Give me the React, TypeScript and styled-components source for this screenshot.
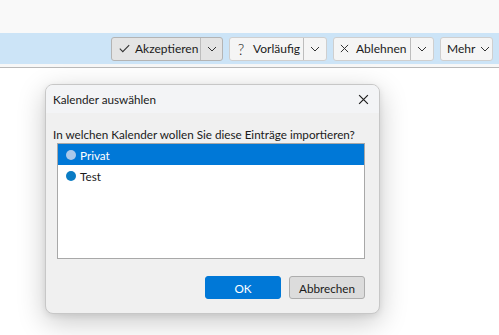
import React from "react";
import styled, { createGlobalStyle } from "styled-components";

const Global = createGlobalStyle`
  html, body { margin: 0; padding: 0; background: #ffffff; }
  body { font-family: "Lato", "Noto Sans", sans-serif; color: #1a1a1a; }
  * { box-sizing: border-box; }
`;

const Page = styled.div`
  width: 499px;
  height: 335px;
  overflow: hidden;
  display: flex;
  flex-direction: column;
  background: #fff;
`;

const TopArea = styled.div`
  height: 33px;
  background: #f9f9f9;
`;

const Bar = styled.div`
  height: 31px;
  background: #cce4f7;
  display: flex;
  justify-content: flex-end;
  align-items: center;
  gap: 6px;
  padding: 0 6px 0 0;
`;

const BarFoot = styled.div`
  height: 4px;
  background: #f7f7f7;
  border-bottom: 1px solid #b9b9b9;
`;

const Group = styled.div<{ $active?: boolean }>`
  display: flex;
  height: 24px;
  border: 1px solid ${(p) => (p.$active ? "#b4b4b4" : "#cfcfcf")};
  border-radius: 3px;
  background: ${(p) => (p.$active ? "#e4e4e4" : "#f5f5f5")};
  overflow: hidden;
`;

const MainPart = styled.div<{ $w: number; $pl?: number }>`
  width: ${(p) => p.$w}px;
  display: flex;
  align-items: center;
  gap: 5px;
  padding-left: ${(p) => p.$pl ?? 7}px;
  font-size: 12px;
  color: #1b1b1b;
  white-space: nowrap;
`;

const DropPart = styled.div<{ $w: number }>`
  width: ${(p) => p.$w}px;
  display: flex;
  align-items: center;
  justify-content: center;
  border-left: 1px solid #bdbdbd;
`;

const Q = styled.span`
  font-size: 15px;
  font-weight: 300;
  width: 10px;
  text-align: center;
  margin-right: 2px;
`;

const Label = styled.span<{ $ml?: number }>`
  margin-left: ${(p) => p.$ml ?? 0}px;
`;

const Content = styled.div`
  flex: 1;
  padding: 16px 0 0 45px;
`;

const Dialog = styled.div`
  width: 335px;
  height: 230px;
  background: #f0f0f0;
  border: 1px solid #c7c7c7;
  border-radius: 8px;
  box-shadow: 0 8px 28px rgba(0, 0, 0, 0.22), 0 2px 6px rgba(0, 0, 0, 0.08);
  display: flex;
  flex-direction: column;
  overflow: hidden;
`;

const TitleBar = styled.div`
  height: 28px;
  background: #f3f4f6;
  display: flex;
  align-items: center;
  justify-content: space-between;
  padding: 0 10px 0 7px;
  font-size: 11.7px;
  color: #1a1a1a;
`;

const Body = styled.div`
  flex: 1;
  display: flex;
  flex-direction: column;
  padding: 13px 14px 14px 7px;
`;

const Prompt = styled.div`
  font-size: 11.7px;
  line-height: 16px;
  margin-bottom: 1px;
  white-space: nowrap;
`;

const List = styled.div`
  margin-left: 4px;
  height: 116px;
  background: #fff;
  border: 1px solid #a8a8a8;
  display: flex;
  flex-direction: column;
`;

const Row = styled.div<{ $selected?: boolean }>`
  height: 21px;
  display: flex;
  align-items: center;
  gap: 4px;
  padding-left: 8px;
  font-size: 11.7px;
  background: ${(p) => (p.$selected ? "#0078d7" : "transparent")};
  color: ${(p) => (p.$selected ? "#fff" : "#1a1a1a")};
`;

const Dot = styled.span<{ $color: string }>`
  width: 10px;
  height: 10px;
  border-radius: 50%;
  background: ${(p) => p.$color};
`;

const Footer = styled.div`
  margin-top: auto;
  display: flex;
  justify-content: flex-end;
  gap: 8px;
`;

const Btn = styled.div<{ $primary?: boolean }>`
  width: 76px;
  height: 23px;
  display: flex;
  align-items: center;
  justify-content: center;
  font-size: 11.7px;
  border-radius: 3px;
  background: ${(p) => (p.$primary ? "#0078d7" : "#dcdcdc")};
  border: 1px solid ${(p) => (p.$primary ? "#0078d7" : "#adadad")};
  color: ${(p) => (p.$primary ? "#fff" : "#1a1a1a")};
`;

const Chevron = () => (
  <svg width="10" height="6" viewBox="0 0 10 6">
    <path d="M1 1 L5 5 L9 1" fill="none" stroke="#333" strokeWidth="1" />
  </svg>
);

const Check = () => (
  <svg width="11" height="9" viewBox="0 0 11 9">
    <path d="M0.8 4.6 L3.8 7.6 L10.2 1.2" fill="none" stroke="#333" strokeWidth="1.1" />
  </svg>
);

const Cross = ({ size = 9, color = "#333" }: { size?: number; color?: string }) => (
  <svg width={size} height={size} viewBox="0 0 10 10">
    <path d="M1 1 L9 9 M9 1 L1 9" fill="none" stroke={color} strokeWidth="1.1" />
  </svg>
);

export default function App() {
  return (
    <Page>
      <Global />
      <TopArea />
      <Bar>
        <Group $active>
          <MainPart $w={88}>
            <Check />
            Akzeptieren
          </MainPart>
          <DropPart $w={22}>
            <Chevron />
          </DropPart>
        </Group>
        <Group>
          <MainPart $w={73} $pl={6}>
            <Q>?</Q>
            Vorläufig
          </MainPart>
          <DropPart $w={23}>
            <Chevron />
          </DropPart>
        </Group>
        <Group>
          <MainPart $w={76} $pl={6}>
            <Cross />
            <Label $ml={2}>Ablehnen</Label>
          </MainPart>
          <DropPart $w={23}>
            <Chevron />
          </DropPart>
        </Group>
        <Group>
          <MainPart $w={51} $pl={6}>
            Mehr
            <Chevron />
          </MainPart>
        </Group>
      </Bar>
      <BarFoot />
      <Content>
        <Dialog>
          <TitleBar>
            Kalender auswählen
            <Cross size={11} color="#222" />
          </TitleBar>
          <Body>
            <Prompt>In welchen Kalender wollen Sie diese Einträge importieren?</Prompt>
            <List>
              <Row $selected>
                <Dot $color="#a9c8ea" />
                Privat
              </Row>
              <Row>
                <Dot $color="#0a7cc4" />
                Test
              </Row>
            </List>
            <Footer>
              <Btn $primary>OK</Btn>
              <Btn>Abbrechen</Btn>
            </Footer>
          </Body>
        </Dialog>
      </Content>
    </Page>
  );
}
